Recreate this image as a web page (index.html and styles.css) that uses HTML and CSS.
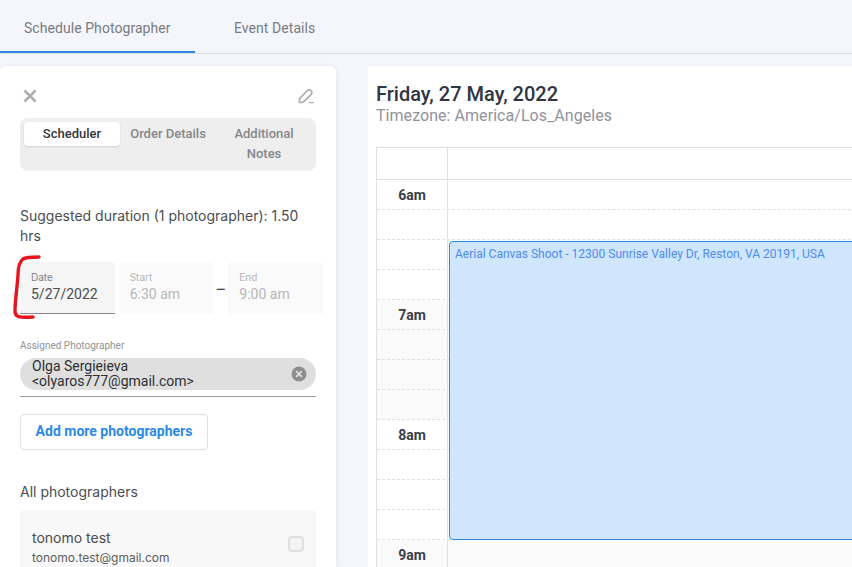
FILE: index.html
```html
<!DOCTYPE html>
<html lang="en">
<head>
<meta charset="utf-8">
<title>Schedule Photographer</title>
<link rel="stylesheet" href="styles.css">
</head>
<body>
<nav class="tabs">
  <a class="tab tab-active">Schedule Photographer</a>
  <a class="tab">Event Details</a>
</nav>
<main class="content">
  <aside class="panel">
    <div class="panel-icons">
      <svg class="icon-x" width="16" height="16" viewBox="0 0 16 16"><path d="M2.500 2.500l11 11M13.500 2.500l-11 11" stroke="#aeaeae" stroke-width="2.600" fill="none"/></svg>
      <svg class="icon-pen" width="18" height="18" viewBox="0 0 18 18"><path d="M1.500 13c0-1 .4-1.700 1-2.300l6.700-6.800c1.200-1.200 2.900-1.200 3.900-.2s1 2.700-.2 3.900l-6.800 6.800c-.6.6-1.300 1-2.300 1H1.500z" stroke="#b0b0b0" stroke-width="1.800" fill="none"/><path d="M10.500 15.700h5.500" stroke="#b0b0b0" stroke-width="1.200" fill="none"/></svg>
    </div>
    <div class="segments">
      <div class="segment segment-active">Scheduler</div>
      <div class="segment">Order Details</div>
      <div class="segment">Additional Notes</div>
    </div>
    <p class="duration">Suggested duration (1 photographer): 1.50 hrs</p>
    <div class="when">
      <div class="field field-date">
        <span class="field-label">Date</span>
        <span class="field-value">5/27/2022</span>
      </div>
      <div class="field field-time">
        <span class="field-label">Start</span>
        <span class="field-value">6:30 am</span>
      </div>
      <span class="dash">–</span>
      <div class="field field-time">
        <span class="field-label">End</span>
        <span class="field-value">9:00 am</span>
      </div>
      <svg class="scribble" width="30" height="66" viewBox="0 0 30 66"><path d="M26 2C20 2 13 2 10 4C6 7 5 12 5 20C4 34 2 46 2 56C2 62 6 63 20 62" stroke="#e8141c" stroke-width="3.400" stroke-linecap="round" stroke-linejoin="round" fill="none"/></svg>
    </div>
    <div class="assigned">
      <div class="assigned-label">Assigned Photographer</div>
      <div class="chip">
        <span class="chip-text">Olga Sergieieva &lt;olyaros777@gmail.com&gt;</span>
        <svg class="chip-x" width="16" height="16" viewBox="0 0 16 16"><circle cx="8" cy="8" r="7.500" fill="#8e8e8e"/><path d="M5.200 5.200l5.600 5.600M10.800 5.200l-5.600 5.600" stroke="#e0e0e0" stroke-width="1.800"/></svg>
      </div>
    </div>
    <button class="add-btn">Add more photographers</button>
    <h2 class="all-title">All photographers</h2>
    <div class="person">
      <div class="person-info">
        <div class="person-name">tonomo test</div>
        <div class="person-mail">tonomo.test@gmail.com</div>
      </div>
      <span class="checkbox"></span>
    </div>
  </aside>
  <section class="calendar">
    <h1 class="cal-date">Friday, 27 May, 2022</h1>
    <div class="cal-zone">Timezone: America/Los_Angeles</div>
    <div class="grid">
      <div class="row row-head"><div class="time"></div><div class="slot"></div></div>
      <div class="row row-dashed"><div class="time time-label">6am</div><div class="slot"></div></div>
      <div class="row row-dashed"><div class="time"></div><div class="slot"></div></div>
      <div class="row row-dashed"><div class="time"></div><div class="slot"></div></div>
      <div class="row row-dashed"><div class="time"></div><div class="slot"></div></div>
      <div class="row row-dashed row-off"><div class="time time-label">7am</div><div class="slot"></div></div>
      <div class="row row-dashed row-off"><div class="time"></div><div class="slot"></div></div>
      <div class="row row-dashed row-off"><div class="time"></div><div class="slot"></div></div>
      <div class="row row-dashed row-off"><div class="time"></div><div class="slot"></div></div>
      <div class="row row-dashed"><div class="time time-label">8am</div><div class="slot"></div></div>
      <div class="row row-dashed"><div class="time"></div><div class="slot"></div></div>
      <div class="row row-dashed"><div class="time"></div><div class="slot"></div></div>
      <div class="row row-dashed"><div class="time"></div><div class="slot"></div></div>
      <div class="row row-off"><div class="time time-label">9am</div><div class="slot"></div></div>
      <div class="event">Aerial Canvas Shoot - 12300 Sunrise Valley Dr, Reston, VA 20191, USA</div>
    </div>
  </section>
</main>
</body>
</html>
```
FILE: styles.css
```css
* { box-sizing: border-box; }
html, body { margin: 0; height: 100%; }
body {
  width: 852px;
  height: 567px;
  overflow: hidden;
  background: #f4f6fb;
  font-family: Inter, sans-serif;
  color: #3f4247;
}
.tabs {
  display: flex;
  height: 54px;
  border-bottom: 1px solid #d8dbe0;
}
.tab {
  height: 53px;
  padding: 19px 24px 0;
  font-size: 14px;
  line-height: 18px;
  font-family: Roboto, sans-serif;
  letter-spacing: .06px;
  color: #787c82;
  white-space: nowrap;
}
.tab-active {
  width: 195px;
  border-bottom: 2px solid #2a8ae6;
  margin-right: 15px;
}
.content {
  display: flex;
  gap: 32px;
  padding-top: 12px;
  height: 513px;
  overflow: hidden;
}
.panel {
  width: 336px;
  flex: none;
  height: 501px;
  overflow: hidden;
  background: #fff;
  border-radius: 6px 6px 0 0;
  box-shadow: 1px 0 4px rgba(0,0,0,.07);
  padding: 19px 20px 0;
}
.panel-icons {
  display: flex;
  justify-content: space-between;
  align-items: center;
  height: 22px;
  margin-bottom: 11px;
}
.icon-x { margin-left: 2px; }
.segments {
  display: flex;
  align-items: flex-start;
  width: 296px;
  height: 52px;
  padding: 4px;
  border-radius: 8px;
  background: #eee;
  box-shadow: 0 1px 1px rgba(0,0,0,.06);
}
.segment {
  flex: 1;
  text-align: center;
  font-family: Roboto, sans-serif;
  font-weight: 500;
  font-size: 13px;
  line-height: 20px;
  padding: 2px 10px;
  color: #85878a;
  width: 96px;
}
.segment-active {
  height: 24px;
  background: #fff;
  border-radius: 4px;
  color: #33363a;
  box-shadow: 0 1px 2px rgba(0,0,0,.12);
}
.duration {
  margin: 36px 0 0;
  font-size: 14px;
  line-height: 20px;
  color: #4a4d51;
}
.when {
  position: relative;
  display: flex;
  align-items: flex-start;
  margin-top: 16px;
  width: 303px;
}
.field {
  display: flex;
  flex-direction: column;
  height: 52px;
  padding: 9px 11px 0;
  background: #f5f5f5;
  border-radius: 4px 4px 0 0;
}
.field-date {
  width: 95px;
  border-bottom: 1px solid #8c8c8c;
  margin-right: 4px;
}
.field-time {
  width: 95px;
  background: #fafafa;
}
.field-label {
  font-size: 10px;
  line-height: 13px;
  color: #7e8185;
}
.field-value {
  font-family: Roboto, sans-serif;
  font-size: 14px;
  line-height: 20px;
  color: #4a4d51;
}
.field-time .field-label, .field-time .field-value { color: #b5b6b8; }
.dash {
  width: 15px;
  text-align: center;
  font-size: 16px;
  line-height: 20px;
  margin-top: 16px;
  color: #444;
}
.scribble {
  position: absolute;
  left: -7px;
  top: -7px;
}
.assigned {
  margin-top: 25px;
  width: 296px;
  border-bottom: 1px solid #9a9a9a;
  padding-bottom: 6px;
}
.assigned-label {
  font-size: 10px;
  line-height: 14px;
  color: #909296;
  font-family: Roboto, sans-serif;
}
.chip {
  display: flex;
  align-items: center;
  justify-content: space-between;
  height: 32px;
  margin-top: 5px;
  padding: 0 9px 0 12px;
  background: #dfdfdf;
  border-radius: 16px;
}
.chip-text {
  width: 200px;
  font-family: Roboto, sans-serif;
  font-size: 14px;
  line-height: 15px;
  color: #2f3033;
}
.add-btn {
  display: block;
  margin-top: 17px;
  width: 188px;
  height: 36px;
  padding: 0 0 2px;
  background: #fff;
  border: 1px solid #dedede;
  border-radius: 4px;
  font-family: Roboto, sans-serif;
  font-weight: 700;
  font-size: 14px;
  color: #2a8ae6;
}
.all-title {
  margin: 32px 0 0;
  font-weight: 400;
  font-size: 14px;
  line-height: 20px;
  color: #4a4d51;
}
.person {
  display: flex;
  align-items: flex-start;
  justify-content: space-between;
  width: 296px;
  height: 68px;
  margin-top: 8px;
  padding: 18px 12px 0;
  background: #f8f8f8;
  border-radius: 4px;
}
.person-name {
  font-size: 14px;
  line-height: 20px;
  color: #4a4d51;
}
.person-mail {
  font-size: 12px;
  line-height: 18px;
  margin-top: 1px;
  color: #5a5d61;
}
.checkbox {
  width: 16px;
  height: 16px;
  margin-top: 8px;
  border: 2px solid #e0e0e0;
  border-radius: 4px;
  background: #f3f3f3;
}
.calendar {
  flex: 1;
  min-width: 0;
  overflow: hidden;
  background: #fff;
  padding: 15px 8px 0;
}
.cal-date {
  margin: 0;
  font-family: Roboto, sans-serif;
  font-weight: 500;
  font-size: 20px;
  line-height: 26px;
  color: #2f3542;
}
.cal-zone {
  font-family: Roboto, sans-serif;
  font-size: 16px;
  line-height: 18px;
  letter-spacing: .05px;
  color: #90939a;
}
.grid {
  position: relative;
  margin-top: 22px;
  width: 600px;
  border-top: 1px solid #e0e0e0;
  border-left: 1px solid #e0e0e0;
}
.row {
  display: flex;
  height: 30px;
  border-bottom: 1px solid #e0e0e0;
}
.row-head { height: 32px; }
.row-dashed { border-bottom: 1px dashed #e0e0e0; }
.row-off { background: #fafafa; }
.time {
  width: 71px;
  border-right: 1px solid #e0e0e0;
  font-family: Roboto, sans-serif;
  font-weight: 700;
  font-size: 14px;
  line-height: 30px;
  text-align: center;
  color: #3a3f4a;
}
.slot { flex: 1; }
.event {
  position: absolute;
  left: 72px;
  top: 93px;
  width: 520px;
  height: 299px;
  padding: 5px;
  background: #d0e6fd;
  border: 1px solid #2a8ae6;
  border-radius: 4px;
  font-family: Roboto, sans-serif;
  font-size: 12px;
  line-height: 15px;
  color: #4c8bf0;
}
```
